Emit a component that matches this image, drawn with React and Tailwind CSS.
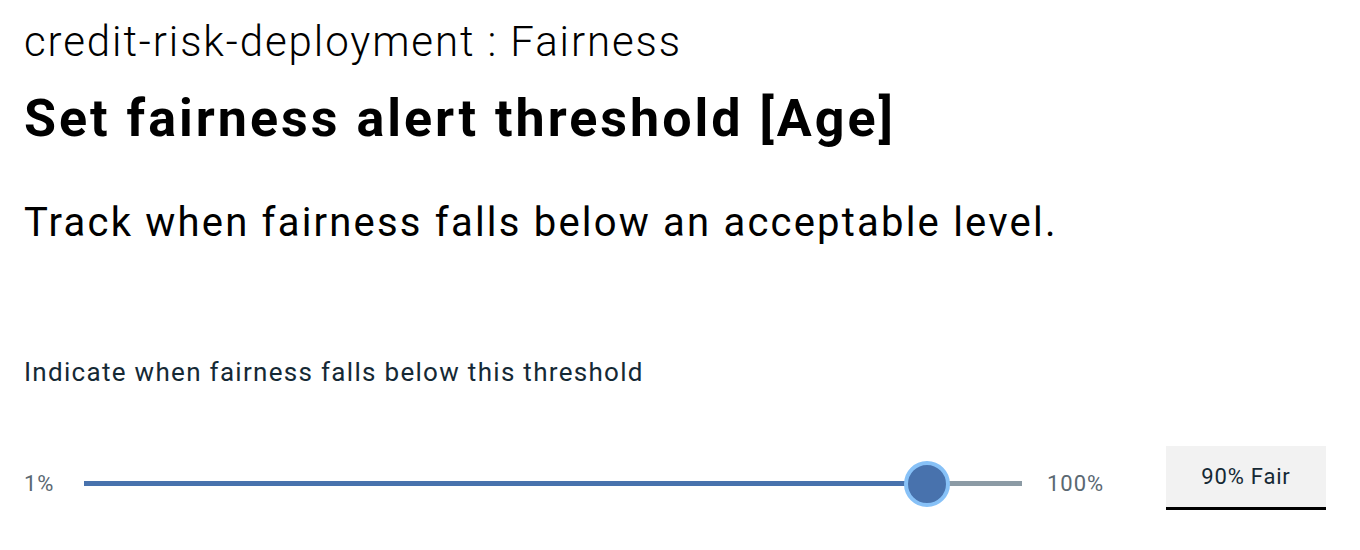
export default function App() {
  const value = 90;
  const pct = ((value - 1) / 99) * 100;

  return (
    <div className="min-h-screen w-[1360px] h-[550px] bg-white px-6 pt-[16px] font-['Roboto',sans-serif] text-black">
      {/* Header */}
      <div className="text-[42px] leading-[52px] font-light tracking-[1.9px]">
        credit-risk-deployment : Fairness
      </div>
      <h1 className="mt-[20px] text-[52px] leading-[62px] font-bold tracking-[3px]">
        Set fairness alert threshold [Age]
      </h1>
      <p className="mt-[48px] text-[40px] leading-[50px] font-normal tracking-[2.2px]">
        Track when fairness falls below an acceptable level.
      </p>

      {/* Threshold */}
      <div className="mt-[108px] text-[26px] leading-[32px] tracking-[1.3px] text-[#152935]">
        Indicate when fairness falls below this threshold
      </div>

      <div className="mt-[58px] flex items-center">
        <span className="w-[60px] text-[22px] tracking-[1px] text-[#5a6872]">1%</span>
        <div className="relative h-[46px] w-[938px] flex items-center">
          <div className="h-[5px] w-full bg-[#8c9ba5]" />
          <div
            className="absolute left-0 h-[5px] bg-[#4872ad]"
            style={{ width: `${pct}%` }}
          />
          <div
            className="absolute h-[46px] w-[46px] -translate-x-1/2 rounded-full border-[4px] border-[#87c1f7] bg-[#4872ad]"
            style={{ left: `${pct}%` }}
          />
        </div>
        <span className="ml-[25px] w-[119px] text-[22px] tracking-[1px] text-[#5a6872]">100%</span>
        <div className="mb-[11px] flex h-[64px] w-[160px] items-center justify-center border-b-[3px] border-black bg-[#f2f2f2] text-[22px] tracking-[0.8px] text-[#152935]">
          90% Fair
        </div>
      </div>
    </div>
  );
}
